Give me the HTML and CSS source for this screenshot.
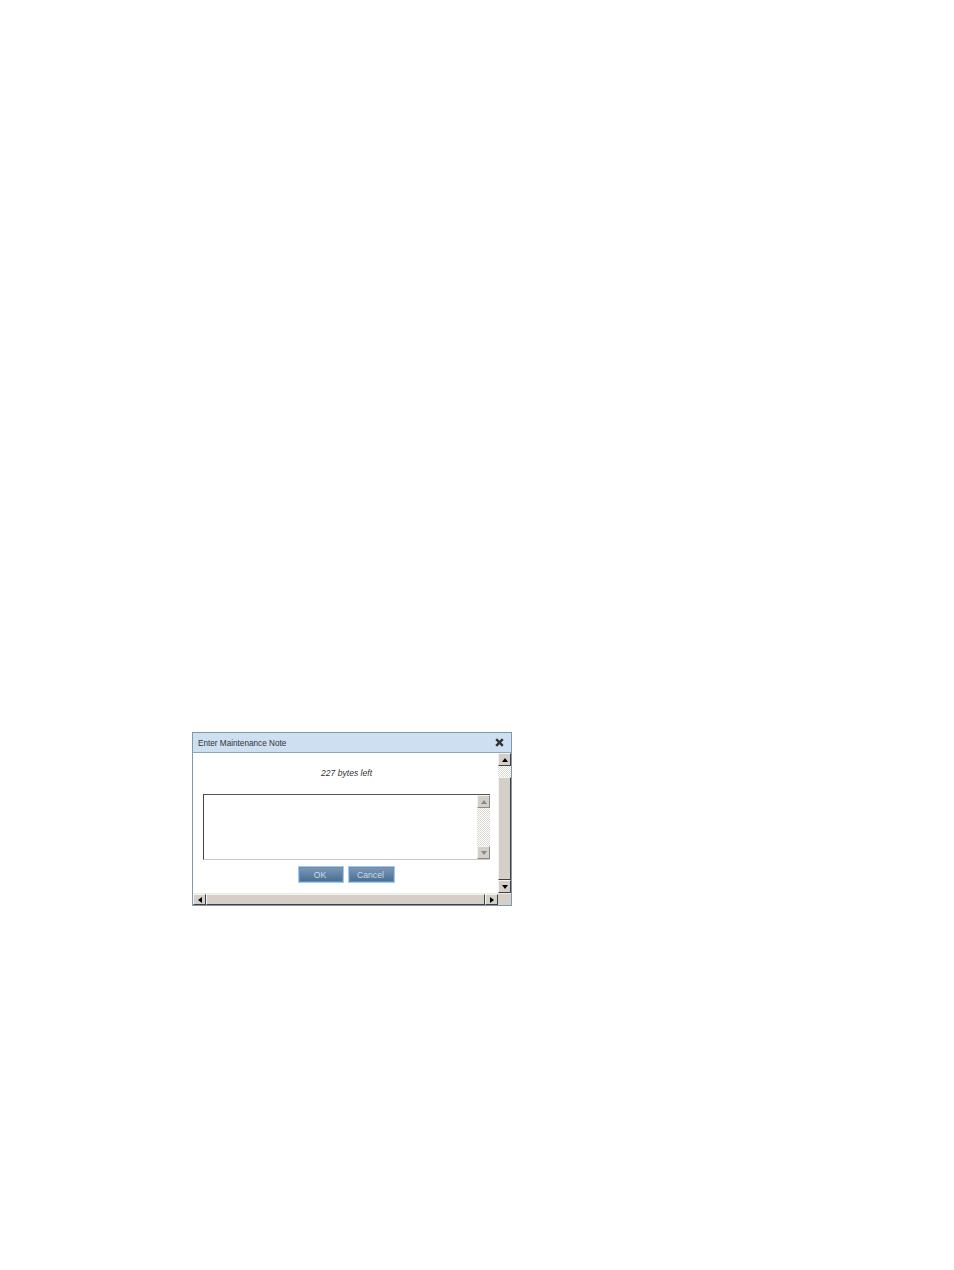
FILE: index.html
```html
<!DOCTYPE html>
<html lang="en">
<head>
    <meta charset="UTF-8">
    <title>Enter Maintenance Note</title>
    <link rel="stylesheet" href="styles.css">
</head>
<body>
    <div class="dialog">
        <div class="title-bar">
            <span class="title">Enter Maintenance Note</span>
            <svg class="close" width="9" height="9" viewBox="0 0 9 9">
                <path d="M1.2 1.2 L7.8 7.8 M7.8 1.2 L1.2 7.8" stroke="#333" stroke-width="2.4" fill="none"/>
            </svg>
        </div>
        <div class="middle">
            <div class="content">
                <p class="bytes">227 bytes left</p>
                <div class="note-box">
                    <div class="note-text"></div>
                    <div class="scrollbar inner-scroll">
                        <div class="arrow-btn faded"><span class="tri up grey"></span></div>
                        <div class="track dither"></div>
                        <div class="arrow-btn faded"><span class="tri down grey"></span></div>
                    </div>
                </div>
                <div class="buttons">
                    <button class="btn btn-ok">OK</button>
                    <button class="btn btn-cancel">Cancel</button>
                </div>
            </div>
            <div class="scrollbar outer-scroll">
                <div class="arrow-btn"><span class="tri up"></span></div>
                <div class="dither gap"></div>
                <div class="arrow-btn thumb"></div>
                <div class="arrow-btn"><span class="tri down"></span></div>
            </div>
        </div>
        <div class="bottom">
            <div class="arrow-btn"><span class="tri left"></span></div>
            <div class="arrow-btn h-thumb"></div>
            <div class="arrow-btn"><span class="tri right"></span></div>
            <div class="corner"></div>
        </div>
    </div>
</body>
</html>
```

FILE: styles.css
```css
* {
    margin: 0;
    padding: 0;
    box-sizing: border-box;
}

body {
    height: 1270px;
    padding: 732px 0 0 192px;
    background: #fff;
    font-family: "Liberation Sans", Arial, sans-serif;
    overflow: hidden;
}

.dialog {
    width: 320px;
    height: 174px;
    border: 1px solid #7f99b2;
    display: flex;
    flex-direction: column;
    background: #fff;
}

.title-bar {
    height: 20px;
    flex: none;
    background: #cddff0;
    border-bottom: 1px solid #8fa7bd;
    display: flex;
    justify-content: space-between;
    align-items: center;
    padding: 0 7px 0 5px;
}

.title {
    font-size: 8.2px;
    color: #333;
    padding-top: 1px;
}

.middle {
    flex: 1;
    display: flex;
    min-height: 0;
}

.content {
    flex: 1;
    padding: 15px 8px 0 10px;
}

.bytes {
    font-size: 8.6px;
    font-style: italic;
    color: #333;
    text-align: center;
    line-height: 10px;
    height: 26px;
}

.note-box {
    width: 287px;
    height: 66px;
    display: flex;
    border-top: 1px solid #555;
    border-left: 1px solid #444;
    border-bottom: 1px solid #ccc9c0;
}

.note-text {
    flex: 1;
}

.scrollbar {
    display: flex;
    flex-direction: column;
    flex: none;
}

.inner-scroll {
    width: 13px;
}

.outer-scroll {
    width: 13px;
}

.arrow-btn {
    width: 13px;
    height: 13px;
    flex: none;
    background: #d4d0c8;
    border-top: 1px solid #f4f3ef;
    border-left: 1px solid #f4f3ef;
    border-right: 1px solid #404040;
    border-bottom: 1px solid #404040;
    display: flex;
    align-items: center;
    justify-content: center;
}

.faded {
    border-right-color: #8a8a8a;
    border-bottom-color: #8a8a8a;
}

.track {
    flex: 1;
}

.dither {
    background-color: #fff;
    background-image: repeating-conic-gradient(#dcd9d2 0 25%, #fff 0 50%);
    background-size: 2px 2px;
}

.gap {
    height: 11px;
    flex: none;
}

.thumb {
    height: auto;
    flex: 1;
}

.tri {
    width: 0;
    height: 0;
    display: block;
    border-style: solid;
    border-color: transparent;
}

.up {
    border-width: 0 3.5px 4px;
    border-bottom-color: #000;
}

.down {
    border-width: 4px 3.5px 0;
    border-top-color: #000;
}

.left {
    border-width: 3.5px 4px 3.5px 0;
    border-right-color: #000;
}

.right {
    border-width: 3.5px 0 3.5px 4px;
    border-left-color: #000;
}

.up.grey {
    border-bottom-color: #8a8a8a;
}

.down.grey {
    border-top-color: #8a8a8a;
}

.buttons {
    display: flex;
    justify-content: center;
    gap: 4px;
    margin-top: 6px;
}

.btn {
    height: 17px;
    border: 1px solid #9accfa;
    box-shadow: inset 0 0 0 1px #6f8ba6;
    background: linear-gradient(to bottom, #7e9ab5, #436d94);
    color: #cfdbe6;
    font-family: inherit;
    font-size: 8.6px;
    outline: none;
    padding-right: 2px;
}

.btn-ok {
    width: 46px;
}

.btn-cancel {
    width: 47px;
}

.bottom {
    height: 12px;
    flex: none;
    display: flex;
    border-top: 1px solid #eeece6;
}

.bottom .arrow-btn {
    height: 100%;
}

.h-thumb {
    flex: 1;
    width: auto;
}

.corner {
    width: 13px;
    background: #d4d0c8;
}
```
